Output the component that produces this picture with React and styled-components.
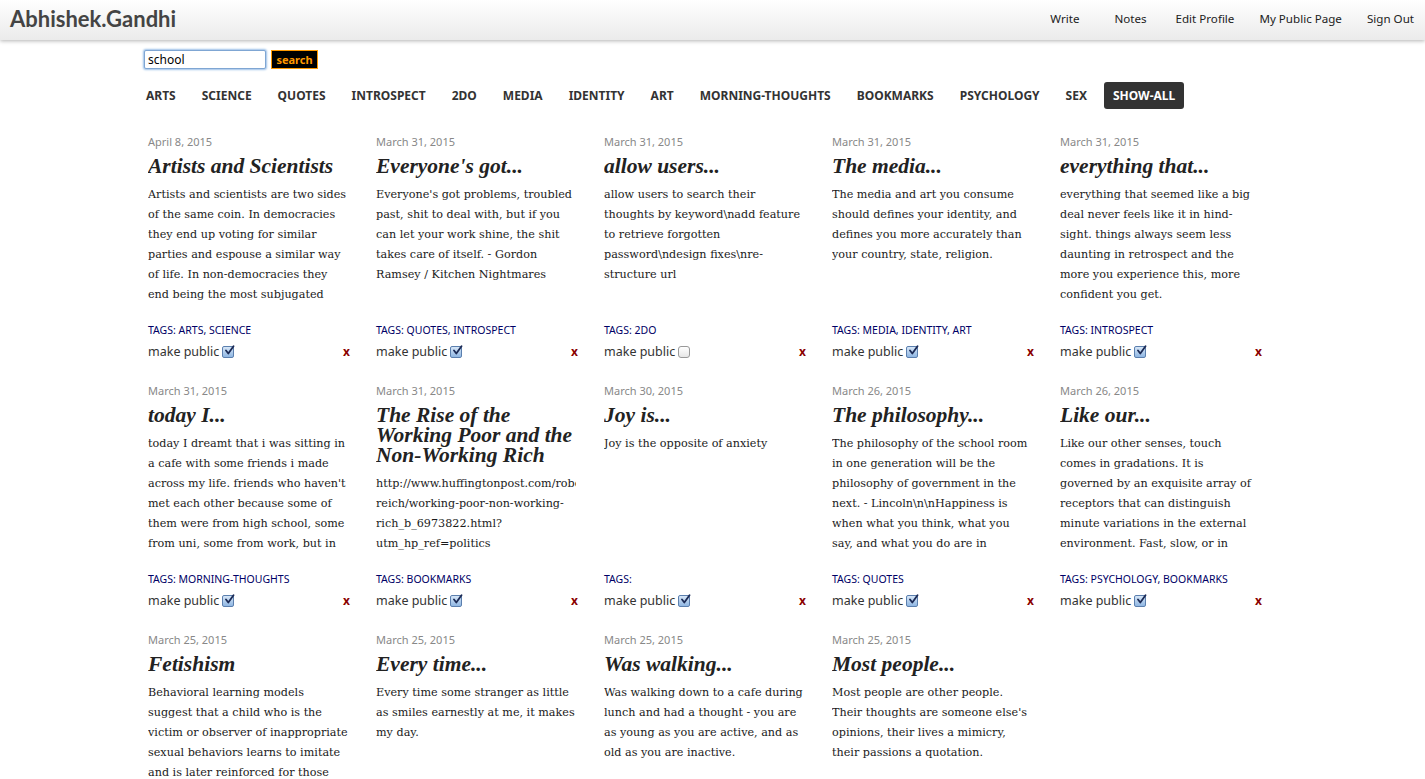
import React from "react";
import styled, { createGlobalStyle } from "styled-components";

const GlobalStyle = createGlobalStyle`
  html, body {
    margin: 0;
    padding: 0;
    background: #fff;
  }
  body {
    font-family: "Noto Sans", "DejaVu Sans", sans-serif;
    color: #333;
    overflow-x: hidden;
  }
`;

const notes = [
  {
    date: "April 8, 2015",
    title: "Artists and Scientists",
    body: "Artists and scientists are two sides of the same coin. In democracies they end up voting for similar parties and espouse a similar way of life. In non-democracies they end being the most subjugated and persecuted people in the society.",
    tags: ["ARTS", "SCIENCE"],
    pub: true,
  },
  {
    date: "March 31, 2015",
    title: "Everyone's got...",
    body: "Everyone's got problems, troubled past, shit to deal with, but if you can let your work shine, the shit takes care of itself. - Gordon Ramsey / Kitchen Nightmares",
    tags: ["QUOTES", "INTROSPECT"],
    pub: true,
  },
  {
    date: "March 31, 2015",
    title: "allow users...",
    body: "allow users to search their thoughts by keyword\\nadd feature to retrieve forgotten password\\ndesign fixes\\nre-structure url",
    tags: ["2DO"],
    pub: false,
  },
  {
    date: "March 31, 2015",
    title: "The media...",
    body: "The media and art you consume should defines your identity, and defines you more accurately than your country, state, religion.",
    tags: ["MEDIA", "IDENTITY", "ART"],
    pub: true,
  },
  {
    date: "March 31, 2015",
    title: "everything that...",
    body: "everything that seemed like a big deal never feels like it in hind-sight. things always seem less daunting in retrospect and the more you experience this, more confident you get.",
    tags: ["INTROSPECT"],
    pub: true,
  },
  {
    date: "March 31, 2015",
    title: "today I...",
    body: "today I dreamt that i was sitting in a cafe with some friends i made across my life. friends who haven't met each other because some of them were from high school, some from uni, some from work, but in the dream they all knew each other.",
    tags: ["MORNING-THOUGHTS"],
    pub: true,
  },
  {
    date: "March 31, 2015",
    title: "The Rise of the Working Poor and the Non-Working Rich",
    body: "http://www.huffingtonpost.com/robert-reich/working-poor-non-working-rich_b_6973822.html?utm_hp_ref=politics",
    tags: ["BOOKMARKS"],
    pub: true,
  },
  {
    date: "March 30, 2015",
    title: "Joy is...",
    body: "Joy is the opposite of anxiety",
    tags: [],
    pub: true,
  },
  {
    date: "March 26, 2015",
    title: "The philosophy...",
    body: "The philosophy of the school room in one generation will be the philosophy of government in the next. - Lincoln\\n\\nHappiness is when what you think, what you say, and what you do are in harmony. - Gandhi",
    tags: ["QUOTES"],
    pub: true,
  },
  {
    date: "March 26, 2015",
    title: "Like our...",
    body: "Like our other senses, touch comes in gradations. It is governed by an exquisite array of receptors that can distinguish minute variations in the external environment. Fast, slow, or in between.",
    tags: ["PSYCHOLOGY", "BOOKMARKS"],
    pub: true,
  },
  {
    date: "March 25, 2015",
    title: "Fetishism",
    body: "Behavioral learning models suggest that a child who is the victim or observer of inappropriate sexual behaviors learns to imitate and is later reinforced for those behaviors.",
    tags: ["PSYCHOLOGY"],
    pub: true,
  },
  {
    date: "March 25, 2015",
    title: "Every time...",
    body: "Every time some stranger as little as smiles earnestly at me, it makes my day.",
    tags: ["INTROSPECT"],
    pub: true,
  },
  {
    date: "March 25, 2015",
    title: "Was walking...",
    body: "Was walking down to a cafe during lunch and had a thought - you are as young as you are active, and as old as you are inactive.",
    tags: ["INTROSPECT"],
    pub: true,
  },
  {
    date: "March 25, 2015",
    title: "Most people...",
    body: "Most people are other people. Their thoughts are someone else's opinions, their lives a mimicry, their passions a quotation.",
    tags: ["QUOTES"],
    pub: true,
  },
];

const categories = [
  "ARTS",
  "SCIENCE",
  "QUOTES",
  "INTROSPECT",
  "2DO",
  "MEDIA",
  "IDENTITY",
  "ART",
  "MORNING-THOUGHTS",
  "BOOKMARKS",
  "PSYCHOLOGY",
  "SEX",
  "SHOW-ALL",
];

const App = () => {
  return (
    <>
      <GlobalStyle />
      <TopBar>
        <Logo>Abhishek.Gandhi</Logo>
        <NavLinks>
          <a>Write</a>
          <a>Notes</a>
          <a>Edit Profile</a>
          <a>My Public Page</a>
          <a>Sign Out</a>
        </NavLinks>
      </TopBar>
      <Page>
        <SearchForm>
          <SearchInput type="text" defaultValue="school" />
          <SearchButton>search</SearchButton>
        </SearchForm>
        <Categories>
          {categories.map((c) => (
            <Category key={c} $active={c === "SHOW-ALL"}>
              {c}
            </Category>
          ))}
        </Categories>
        <Grid>
          {notes.map((n, i) => (
            <Note key={i}>
              <NoteDate>{n.date}</NoteDate>
              <NoteText>
                <h2>{n.title}</h2>
                <p>{n.body}</p>
              </NoteText>
              <Tags>
                TAGS:{" "}
                {n.tags.map((t, j) => (
                  <span key={t}>
                    {t}
                    {j < n.tags.length - 1 ? ", " : ""}
                  </span>
                ))}
              </Tags>
              <NoteFoot>
                <label>
                  make public
                  <Check $on={n.pub}>
                    {n.pub && (
                      <svg width="11" height="11" viewBox="0 0 11 11">
                        <path
                          d="M2 5.5 L4.3 8.5 L9.5 1.2"
                          fill="none"
                          stroke="#1b2a55"
                          strokeWidth="1.8"
                          strokeLinecap="round"
                          strokeLinejoin="round"
                        />
                      </svg>
                    )}
                  </Check>
                </label>
                <Delete>x</Delete>
              </NoteFoot>
            </Note>
          ))}
        </Grid>
      </Page>
    </>
  );
};

const TopBar = styled.div`
  height: 40px;
  display: flex;
  align-items: center;
  justify-content: space-between;
  padding: 0 11px 0 10px;
  background: linear-gradient(#ffffff, #ebebeb);
  box-shadow: 0 1px 4px rgba(0, 0, 0, 0.3);
  box-sizing: border-box;
`;
const Logo = styled.div`
  font-family: "Lato", "Noto Sans", sans-serif;
  font-weight: 700;
  font-size: 22px;
  color: #444;
  margin-top: -3px;
`;
const NavLinks = styled.div`
  display: flex;
  margin-top: -4px;
  a {
    font-size: 11.6px;
    color: #222;
    margin-left: 25px;
    cursor: pointer;
  }
  a:first-child {
    margin-left: 0;
  }
  a:nth-child(2) {
    margin-left: 35px;
  }
  a:nth-child(3) {
    margin-left: 29px;
  }
`;
const Page = styled.div`
  width: 1137px;
  margin: 0 auto;
  padding-top: 10px;
`;
const SearchForm = styled.div`
  display: flex;
  align-items: center;
  gap: 5px;
`;
const SearchInput = styled.input`
  width: 122px;
  height: 19px;
  box-sizing: border-box;
  border: 1px solid #7fa6d3;
  box-shadow: 0 0 2px 1px #9cc0e8;
  border-radius: 2px;
  padding: 0 3px;
  font-family: "Noto Sans", sans-serif;
  font-size: 12px;
  color: #000;
  outline: none;
`;
const SearchButton = styled.button`
  height: 19px;
  width: 47px;
  box-sizing: border-box;
  background: #000;
  border: 1px solid #f90;
  color: #f90;
  font-family: "Noto Sans", sans-serif;
  font-weight: 700;
  font-size: 11px;
  padding: 0;
  cursor: pointer;
`;
const Categories = styled.div`
  display: flex;
  align-items: center;
  gap: 8px;
  margin: 13px 0 0 -7px;
`;
const Category = styled.div`
  font-weight: 700;
  font-size: 12px;
  line-height: 13px;
  padding: 7px 9px;
  border-radius: 3px;
  color: ${(p) => (p.$active ? "#fff" : "#333")};
  background: ${(p) => (p.$active ? "#333" : "transparent")};
  cursor: pointer;
`;
const Grid = styled.div`
  display: grid;
  grid-template-columns: repeat(5, 200px);
  column-gap: 28px;
  padding: 26px 0 0 4px;
`;
const Note = styled.div`
  width: 200px;
  height: 249px;
`;
const NoteDate = styled.div`
  font-size: 11px;
  line-height: 14px;
  color: #888;
  margin-bottom: 7px;
`;
const NoteText = styled.div`
  height: 150px;
  overflow: hidden;
  font-family: "Liberation Serif", serif;
  h2 {
    margin: 0 0 9px;
    font-size: 21.5px;
    line-height: 20px;
    font-weight: 700;
    font-style: italic;
    color: #222;
  }
  p {
    margin: 0;
    font-family: "DejaVu Serif", serif;
    font-size: 11.2px;
    line-height: 20px;
    color: #1a1a1a;
  }
`;
const Tags = styled.div`
  margin-top: 17px;
  font-size: 10.5px;
  line-height: 14px;
  color: #000066;
`;
const NoteFoot = styled.div`
  display: flex;
  justify-content: space-between;
  align-items: center;
  margin-top: 6px;
  label {
    display: flex;
    align-items: center;
    gap: 3px;
    font-size: 12.5px;
    line-height: 16px;
    color: #333;
  }
`;
const Check = styled.span`
  display: inline-flex;
  align-items: center;
  justify-content: center;
  width: 12px;
  height: 12px;
  box-sizing: border-box;
  border-radius: ${(p) => (p.$on ? "2px" : "3px")};
  border: 1px solid ${(p) => (p.$on ? "#5b7fae" : "#999")};
  background: ${(p) =>
    p.$on
      ? "linear-gradient(#d6e6f7, #8fb6e2)"
      : "linear-gradient(#fff, #e6e6e6)"};
  svg {
    margin: -3px -2px 0 0;
  }
`;
const Delete = styled.span`
  font-weight: 700;
  font-size: 12px;
  color: #8b0000;
  margin-right: -2px;
  cursor: pointer;
`;

export default App;
